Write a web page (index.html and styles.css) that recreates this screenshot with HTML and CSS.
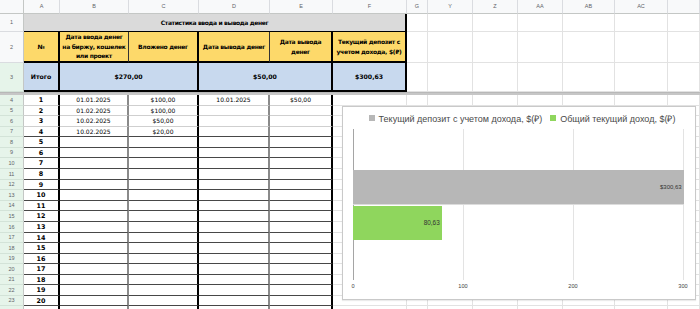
FILE: index.html
```html
<!DOCTYPE html>
<html lang="ru">
<head>
<meta charset="utf-8">
<title>Статистика ввода и вывода денег</title>
<link rel="stylesheet" href="styles.css">
</head>
<body>
<div class="sheet">
  <div class="r hdr">
    <div class="corner"></div><div class="ch">A</div><div class="ch">B</div><div class="ch">C</div><div class="ch">D</div><div class="ch">E</div><div class="ch">F</div><div class="ch">G</div><div class="ch">Y</div><div class="ch">Z</div><div class="ch">AA</div><div class="ch">AB</div><div class="ch">AC</div><div class="ch"></div>
  </div>
  <div class="r">
    <div class="rh plain">1</div><div class="title">Статистика ввода и вывода денег</div><div class="g"></div><div class="g"></div><div class="g"></div><div class="g"></div><div class="g"></div><div class="g"></div><div class="g"></div>
  </div>
  <div class="r">
    <div class="rh plain">2</div>
    <div class="hd a">№</div>
    <div class="hd b">Дата ввода денег<br>на биржу, кошелек<br>или проект</div>
    <div class="hd cc">Вложено денег</div>
    <div class="hd d">Дата вывода денег</div>
    <div class="hd e">Дата вывода<br>денег</div>
    <div class="hd f">Текущий депозит с<br>учетом дохода, $(₽)</div>
    <div class="g"></div><div class="g"></div><div class="g"></div><div class="g"></div><div class="g"></div><div class="g"></div><div class="g"></div>
  </div>
  <div class="r">
    <div class="rh">3</div>
    <div class="tot a">Итого</div>
    <div class="tot cc span2">$270,00</div>
    <div class="tot e span2">$50,00</div>
    <div class="tot f">$300,63</div>
    <div class="g"></div><div class="g"></div><div class="g"></div><div class="g"></div><div class="g"></div><div class="g"></div><div class="g"></div>
  </div>
  <div class="freeze"></div>

  <div class="r lt"><div class="rh">4</div><div class="c a">1</div><div class="c b">01.01.2025</div><div class="c cc">$100,00</div><div class="c d">10.01.2025</div><div class="c e">$50,00</div><div class="g"></div><div class="g"></div><div class="g"></div><div class="g"></div><div class="g"></div><div class="g"></div><div class="g"></div><div class="g"></div></div>
  <div class="r lt"><div class="rh">5</div><div class="c a">2</div><div class="c b">01.02.2025</div><div class="c cc">$100,00</div><div class="c d"></div><div class="c e"></div><div class="g"></div><div class="g"></div><div class="g"></div><div class="g"></div><div class="g"></div><div class="g"></div><div class="g"></div><div class="g"></div></div>
  <div class="r lt"><div class="rh">6</div><div class="c a">3</div><div class="c b">10.02.2025</div><div class="c cc">$50,00</div><div class="c d"></div><div class="c e"></div><div class="g"></div><div class="g"></div><div class="g"></div><div class="g"></div><div class="g"></div><div class="g"></div><div class="g"></div><div class="g"></div></div>
  <div class="r"><div class="rh">7</div><div class="c a">4</div><div class="c b">10.02.2025</div><div class="c cc">$20,00</div><div class="c d"></div><div class="c e"></div><div class="g"></div><div class="g"></div><div class="g"></div><div class="g"></div><div class="g"></div><div class="g"></div><div class="g"></div><div class="g"></div></div>
  <div class="r"><div class="rh">8</div><div class="c a">5</div><div class="c b"></div><div class="c cc"></div><div class="c d"></div><div class="c e"></div><div class="g"></div><div class="g"></div><div class="g"></div><div class="g"></div><div class="g"></div><div class="g"></div><div class="g"></div><div class="g"></div></div>
  <div class="r"><div class="rh">9</div><div class="c a">6</div><div class="c b"></div><div class="c cc"></div><div class="c d"></div><div class="c e"></div><div class="g"></div><div class="g"></div><div class="g"></div><div class="g"></div><div class="g"></div><div class="g"></div><div class="g"></div><div class="g"></div></div>
  <div class="r"><div class="rh">10</div><div class="c a">7</div><div class="c b"></div><div class="c cc"></div><div class="c d"></div><div class="c e"></div><div class="g"></div><div class="g"></div><div class="g"></div><div class="g"></div><div class="g"></div><div class="g"></div><div class="g"></div><div class="g"></div></div>
  <div class="r"><div class="rh">11</div><div class="c a">8</div><div class="c b"></div><div class="c cc"></div><div class="c d"></div><div class="c e"></div><div class="g"></div><div class="g"></div><div class="g"></div><div class="g"></div><div class="g"></div><div class="g"></div><div class="g"></div><div class="g"></div></div>
  <div class="r"><div class="rh">12</div><div class="c a">9</div><div class="c b"></div><div class="c cc"></div><div class="c d"></div><div class="c e"></div><div class="g"></div><div class="g"></div><div class="g"></div><div class="g"></div><div class="g"></div><div class="g"></div><div class="g"></div><div class="g"></div></div>
  <div class="r"><div class="rh">13</div><div class="c a">10</div><div class="c b"></div><div class="c cc"></div><div class="c d"></div><div class="c e"></div><div class="g"></div><div class="g"></div><div class="g"></div><div class="g"></div><div class="g"></div><div class="g"></div><div class="g"></div><div class="g"></div></div>
  <div class="r"><div class="rh">14</div><div class="c a">11</div><div class="c b"></div><div class="c cc"></div><div class="c d"></div><div class="c e"></div><div class="g"></div><div class="g"></div><div class="g"></div><div class="g"></div><div class="g"></div><div class="g"></div><div class="g"></div><div class="g"></div></div>
  <div class="r"><div class="rh">15</div><div class="c a">12</div><div class="c b"></div><div class="c cc"></div><div class="c d"></div><div class="c e"></div><div class="g"></div><div class="g"></div><div class="g"></div><div class="g"></div><div class="g"></div><div class="g"></div><div class="g"></div><div class="g"></div></div>
  <div class="r"><div class="rh">16</div><div class="c a">13</div><div class="c b"></div><div class="c cc"></div><div class="c d"></div><div class="c e"></div><div class="g"></div><div class="g"></div><div class="g"></div><div class="g"></div><div class="g"></div><div class="g"></div><div class="g"></div><div class="g"></div></div>
  <div class="r"><div class="rh">17</div><div class="c a">14</div><div class="c b"></div><div class="c cc"></div><div class="c d"></div><div class="c e"></div><div class="g"></div><div class="g"></div><div class="g"></div><div class="g"></div><div class="g"></div><div class="g"></div><div class="g"></div><div class="g"></div></div>
  <div class="r"><div class="rh">18</div><div class="c a">15</div><div class="c b"></div><div class="c cc"></div><div class="c d"></div><div class="c e"></div><div class="g"></div><div class="g"></div><div class="g"></div><div class="g"></div><div class="g"></div><div class="g"></div><div class="g"></div><div class="g"></div></div>
  <div class="r"><div class="rh">19</div><div class="c a">16</div><div class="c b"></div><div class="c cc"></div><div class="c d"></div><div class="c e"></div><div class="g"></div><div class="g"></div><div class="g"></div><div class="g"></div><div class="g"></div><div class="g"></div><div class="g"></div><div class="g"></div></div>
  <div class="r"><div class="rh">20</div><div class="c a">17</div><div class="c b"></div><div class="c cc"></div><div class="c d"></div><div class="c e"></div><div class="g"></div><div class="g"></div><div class="g"></div><div class="g"></div><div class="g"></div><div class="g"></div><div class="g"></div><div class="g"></div></div>
  <div class="r"><div class="rh">21</div><div class="c a">18</div><div class="c b"></div><div class="c cc"></div><div class="c d"></div><div class="c e"></div><div class="g"></div><div class="g"></div><div class="g"></div><div class="g"></div><div class="g"></div><div class="g"></div><div class="g"></div><div class="g"></div></div>
  <div class="r"><div class="rh">22</div><div class="c a">19</div><div class="c b"></div><div class="c cc"></div><div class="c d"></div><div class="c e"></div><div class="g"></div><div class="g"></div><div class="g"></div><div class="g"></div><div class="g"></div><div class="g"></div><div class="g"></div><div class="g"></div></div>
  <div class="r"><div class="rh">23</div><div class="c a">20</div><div class="c b"></div><div class="c cc"></div><div class="c d"></div><div class="c e"></div><div class="g"></div><div class="g"></div><div class="g"></div><div class="g"></div><div class="g"></div><div class="g"></div><div class="g"></div><div class="g"></div></div>
  <div class="r"><div class="rh"></div><div class="c a"></div><div class="c b"></div><div class="c cc"></div><div class="c d"></div><div class="c e"></div><div class="g"></div><div class="g"></div><div class="g"></div><div class="g"></div><div class="g"></div><div class="g"></div><div class="g"></div><div class="g"></div></div>
</div>

<div class="chart">
  <div class="legend">
    <span class="key"><i class="sw sw-gray"></i>Текущий депозит с учетом дохода, $(₽)</span>
    <span class="key"><i class="sw sw-green"></i>Общий текущий доход, $(₽)</span>
  </div>
  <div class="plot">
    <div class="vline axis-line" style="left:0%"></div>
    <div class="vline" style="left:33.333%"></div>
    <div class="vline" style="left:66.667%"></div>
    <div class="vline" style="left:100%"></div>
    <div class="bars">
      <div class="bar bar-gray" style="width:100.21%"><span>$300,63</span></div>
      <div class="bar bar-green" style="width:26.88%"><span>80,63</span></div>
    </div>
  </div>
  <div class="ticks">
    <span style="left:0%">0</span>
    <span style="left:33.333%">100</span>
    <span style="left:66.667%">200</span>
    <span style="left:100%">300</span>
  </div>
</div>
</body>
</html>
```
FILE: styles.css
```css
html, body {
  margin: 0;
  padding: 0;
}
body {
  width: 700px;
  height: 309px;
  overflow: hidden;
  background: #fff;
  position: relative;
  font-family: "DejaVu Sans", Verdana, sans-serif;
  color: #000;
}

.sheet {
  display: grid;
  grid-template-columns: 24px 36px 69px 70px 71px 63px 74px 21px 45px 45px 45px 52px 53px 32px;
  grid-template-rows: 14px 18px 31px 29px 3px 11px 10px 11px 10px 11px 10px 11px 11px 10px 11px 10px 11px 11px 10px 11px 10px 11px 10px 11px 10px 10px;
  width: 700px;
}

.r { display: contents; }

.corner, .ch, .rh, .g, .title, .hd, .tot, .c, .freeze {
  box-sizing: border-box;
  min-width: 0;
}

/* column header row */
.corner {
  background: #f8f9fa;
  border-right: 1px solid #c4c7c5;
  border-bottom: 1px solid #c4c7c5;
}
.ch {
  background: #f8f9fa;
  border-right: 1px solid #dadce0;
  border-bottom: 1px solid #c4c7c5;
  font-family: "Liberation Sans", Arial, sans-serif;
  font-size: 5.5px;
  line-height: 7px;
  color: #5f6368;
  display: flex;
  align-items: center;
  justify-content: center;
}

/* row headers */
.rh {
  background: #e6f4ea;
  border-right: 1px solid #c4c7c5;
  border-bottom: 1px solid #d3e3d8;
  font-family: "Liberation Sans", Arial, sans-serif;
  font-size: 5.5px;
  line-height: 7px;
  color: #5f6368;
  display: flex;
  align-items: center;
  justify-content: center;
}
.rh.plain {
  background: #f8f9fa;
  border-bottom-color: #dadce0;
}

/* empty grid cells */
.g {
  border-right: 1px solid #e2e2e2;
  border-bottom: 1px solid #e2e2e2;
}

/* title row */
.title {
  grid-column: span 6;
  background: #dadada;
  border-right: 2px solid #000;
  border-bottom: 1px solid #000;
  font-weight: bold;
  font-size: 6px;
  line-height: 8px;
  letter-spacing: -0.35px;
  display: flex;
  align-items: center;
  justify-content: center;
  white-space: nowrap;
}

/* header row */
.hd {
  background: #fdd96a;
  border-bottom: 2px solid #000;
  font-weight: bold;
  font-size: 6px;
  line-height: 9.5px;
  letter-spacing: -0.3px;
  text-align: center;
  display: flex;
  align-items: center;
  justify-content: center;
  white-space: nowrap;
}

/* totals row */
.tot {
  background: #c8d9ee;
  border-bottom: 2px solid #000;
  font-weight: bold;
  font-size: 6.2px;
  line-height: 8px;
  display: flex;
  align-items: center;
  justify-content: center;
  white-space: nowrap;
}
.span2 { grid-column: span 2; }

.freeze {
  grid-column: 1 / -1;
  background: #c6c6c6;
  border-top: 1px solid #b8b8b8;
}

/* data cells */
.c {
  border-bottom: 1px solid #474747;
  font-size: 6px;
  line-height: 8px;
  display: flex;
  align-items: center;
  justify-content: center;
  white-space: nowrap;
}
.lt > .c { border-bottom: 1px solid #cfcfcf; }

.a { border-right: 2px solid #000; font-weight: bold; }
.b { border-right: 1px solid #555; }
.hd.b { border-right: 1px solid #333; }
.c.b { border-right: 2px solid #8a8a8a; }
.cc { border-right: 2px solid #000; }
.d { border-right: 1px solid #333; }
.c.d { border-right: 2px solid #8a8a8a; }
.e { border-right: 2px solid #000; }
.f { border-right: 2px solid #000; }
.c.a { font-size: 6.4px; }

/* chart overlay */
.chart {
  position: absolute;
  left: 342px;
  top: 106px;
  width: 354px;
  height: 194px;
  box-sizing: border-box;
  background: #fff;
  border: 1px solid #c9c9c9;
  box-shadow: 0 1px 1px rgba(0,0,0,0.08);
  font-family: "Liberation Sans", Arial, sans-serif;
}
.legend {
  height: 22px;
  display: flex;
  align-items: center;
  justify-content: center;
  gap: 8px;
  padding-left: 6px;
  font-size: 9px;
  color: #4a4a4a;
}
.key {
  display: flex;
  align-items: center;
  gap: 4px;
  white-space: nowrap;
}
.sw {
  display: block;
  width: 6px;
  height: 6px;
}
.sw-gray { background: #b7b7b7; }
.sw-green { background: #8fd65d; }

.plot {
  position: relative;
  margin-left: 10px;
  width: 330px;
  height: 151px;
}
.vline {
  position: absolute;
  top: 0;
  bottom: 0;
  width: 1px;
  background: #e3e3e3;
}
.axis-line { background: #a5a5a5; }
.bars {
  position: relative;
  height: 100%;
  display: flex;
  flex-direction: column;
  justify-content: center;
  gap: 1px;
}
.bar {
  height: 35px;
  display: flex;
  align-items: center;
  justify-content: flex-end;
  padding-right: 2px;
  box-sizing: border-box;
  font-size: 6px;
  color: #333;
}
.bar-gray {
  background: #b7b7b7;
  border-bottom: 1px solid #dcdcdc;
}
.bar-green {
  background: #8fd65d;
  height: 34px;
  font-size: 6.4px;
}
.ticks {
  position: relative;
  margin-left: 10px;
  width: 330px;
  height: 12px;
  font-size: 5.6px;
  color: #444;
}
.ticks span {
  position: absolute;
  top: 3px;
  transform: translateX(-50%);
}
```
